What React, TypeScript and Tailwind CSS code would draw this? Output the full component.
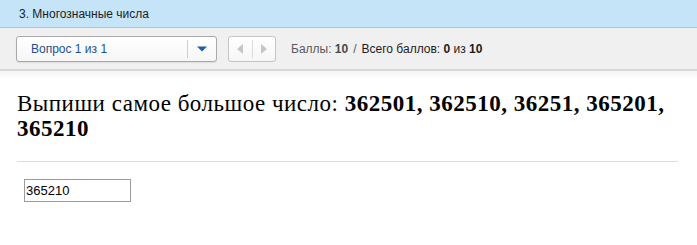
export default function App() {
  return (
    <div className="min-h-[245px] w-full bg-white font-['Liberation_Sans',Arial,sans-serif] text-[12px]">
      {/* title bar */}
      <div className="flex h-[28px] items-center border-b border-[#9fc6e6] bg-[#c6e4f8] px-[19px] text-[#1c1c1c]">
        3. Многозначные числа
      </div>

      {/* toolbar */}
      <div className="flex h-[43px] items-center gap-[11px] border-b-2 border-[#d8d8d8] bg-[#f0f0f0] px-[16px]">
        <div className="flex h-[26px] w-[201px] items-stretch rounded-[3px] border border-[#a9a9a9] bg-gradient-to-b from-white to-[#f6f6f6] shadow-[0_1px_1px_rgba(0,0,0,0.08)]">
          <div className="flex flex-1 items-center pl-[14px] text-[#1f4f8f]">Вопрос 1 из 1</div>
          <div className="my-[3px] w-px bg-[#cfcfcf]" />
          <div className="flex w-[28px] items-center justify-center">
            <svg width="10" height="6" viewBox="0 0 10 6">
              <path d="M0 0.5 H10 L5 5.5 Z" fill="#1e5ea8" />
            </svg>
          </div>
        </div>

        <div className="flex h-[26px] w-[48px] items-stretch rounded-[3px] border border-[#c4c4c4] bg-gradient-to-b from-white to-[#f6f6f6]">
          <div className="flex flex-1 items-center justify-center">
            <svg width="6" height="10" viewBox="0 0 6 10">
              <path d="M6 0 V10 L0 5 Z" fill="#c6c6c6" />
            </svg>
          </div>
          <div className="my-[3px] w-px bg-[#dcdcdc]" />
          <div className="flex flex-1 items-center justify-center">
            <svg width="6" height="10" viewBox="0 0 6 10">
              <path d="M0 0 V10 L6 5 Z" fill="#c6c6c6" />
            </svg>
          </div>
        </div>

        <div className="ml-[4px] flex items-center gap-[5px]">
          <span className="text-[#5a5a5a]">
            Баллы: <b className="text-[#4a4a4a]">10</b>
          </span>
          <span className="text-[#5a5a5a]">/</span>
          <span className="text-[#1c1c1c]">
            Всего баллов: <b>0</b> из <b>10</b>
          </span>
        </div>
      </div>
      <div className="h-[8px] bg-gradient-to-b from-[#f4f4f4] to-white" />

      {/* question */}
      <div className="px-[17px]">
        <h1 className="pt-[12px] font-['Liberation_Serif',serif] text-[23px] leading-[25px] tracking-[0.5px] text-black">
          Выпиши самое большое число: <b>362501, 362510, 36251, 365201, 365210</b>
        </h1>
        <div className="mt-[20px] h-px w-[661px] bg-[#dedede]" />
        <div className="px-[7px] pt-[17px]">
          <input
            readOnly
            value="365210"
            className="h-[23px] w-[107px] border border-[#9c9c9c] px-[1px] font-['Liberation_Sans',Arial,sans-serif] text-[13px] text-black outline-none"
          />
        </div>
      </div>
    </div>
  );
}
